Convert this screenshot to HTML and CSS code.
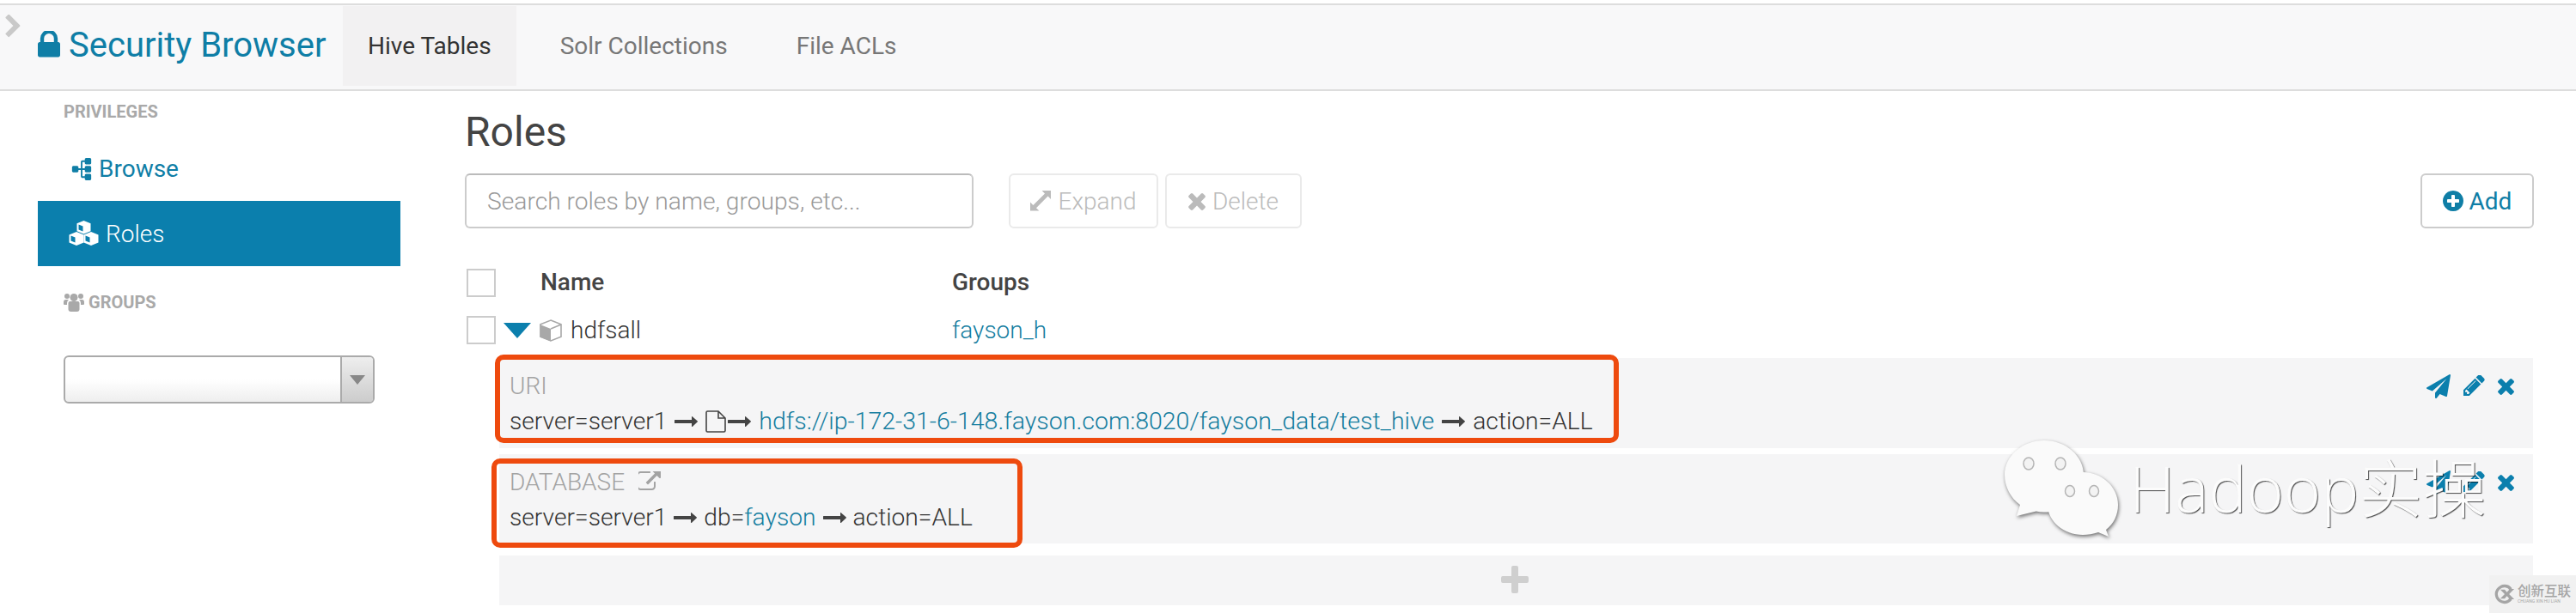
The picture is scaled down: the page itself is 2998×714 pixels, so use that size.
FILE: index.html
```html
<!DOCTYPE html>
<html lang="en">
<head>
<meta charset="utf-8">
<title>Security Browser</title>
<link rel="stylesheet" href="styles.css">
</head>
<body>
<svg class="sprite" width="0" height="0" aria-hidden="true">
  <symbol id="i-lock" viewBox="320 256 1152 1280"><path d="M640 768h512v-192q0-106-75-181t-181-75-181 75-75 181v192zm832 96v576q0 40-28 68t-68 28h-960q-40 0-68-28t-28-68v-576q0-40 28-68t68-28h32v-192q0-184 132-316t316-132 316 132 132 316v192h32q40 0 68 28t28 68z"/></symbol>
  <symbol id="i-chevron" viewBox="320 128 1100 1536"><path d="M1363 877l-742 742q-19 19-45 19t-45-19l-166-166q-19-19-19-45t19-45l531-531-531-531q-19-19-19-45t19-45l166-166q19-19 45-19t45 19l742 742q19 19 19 45t-19 45z"/></symbol>
  <symbol id="i-plus-circle" viewBox="128 128 1536 1536"><path d="M1344 960v-128q0-26-19-45t-45-19h-256v-256q0-26-19-45t-45-19h-128q-26 0-45 19t-19 45v256h-256q-26 0-45 19t-19 45v128q0 26 19 45t45 19h256v256q0 26 19 45t45 19h128q26 0 45-19t19-45v-256h256q26 0 45-19t19-45zm320-64q0 209-103 385.5t-279.5 279.5-385.5 103-385.5-103-279.5-279.5-103-385.5 103-385.5 279.5-279.5 385.5-103 385.5 103 279.5 279.5 103 385.5z"/></symbol>
  <symbol id="i-times" viewBox="300 240 1190 1320"><path d="M1490 1322q0 40-28 68l-136 136q-28 28-68 28t-68-28l-294-294-294 294q-28 28-68 28t-68-28l-136-136q-28-28-28-68t28-68l294-294-294-294q-28-28-28-68t28-68l136-136q28-28 68-28t68 28l294 294 294-294q28-28 68-28t68 28l136 136q28 28 28 68t-28 68l-294 294 294 294q28 28 28 68z"/></symbol>
  <symbol id="i-plane" viewBox="0 0 1792 1792"><path d="M1764 11q33 24 27 64l-256 1536q-5 29-32 45-14 8-31 8-11 0-24-5l-453-185-242 295q-18 23-49 23-13 0-22-4-19-7-30.5-23.5t-11.5-36.5v-349l864-1059-1069 925-395-162q-37-14-40-55-2-40 32-59l1664-960q15-9 32-9 20 0 36 11z"/></symbol>
  <symbol id="i-pencil" viewBox="128 192 1536 1536"><path d="M491 1536l91-91-235-235-91 91v107h128v128h107zm523-928q0-22-22-22-10 0-17 7l-542 542q-7 7-7 17 0 22 22 22 10 0 17-7l542-542q7-7 7-17zm-54-192l416 416-832 832h-416v-416zm683 96q0 53-37 90l-166 166-416-416 166-165q36-38 90-38 53 0 91 38l235 234q37 39 37 91z"/></symbol>
  <symbol id="i-arrow" viewBox="0 420 1728 950"><path d="M1728 893q0 14-10 24l-384 354q-16 14-35 6-19-9-19-29v-224h-1248q-14 0-23-9t-9-23v-192q0-14 9-23t23-9h1248v-224q0-21 19-29t35 5l384 350q10 10 10 23z"/></symbol>
  <symbol id="i-sitemap" viewBox="0 0 1792 1792"><path transform="rotate(-90 896 896)" d="M1792 1248v320q0 40-28 68t-68 28h-320q-40 0-68-28t-28-68v-320q0-40 28-68t68-28h96v-192h-512v192h96q40 0 68 28t28 68v320q0 40-28 68t-68 28h-320q-40 0-68-28t-28-68v-320q0-40 28-68t68-28h96v-192h-512v192h96q40 0 68 28t28 68v320q0 40-28 68t-68 28h-320q-40 0-68-28t-28-68v-320q0-40 28-68t68-28h96v-192q0-52 38-90t90-38h512v-192h-96q-40 0-68-28t-28-68v-320q0-40 28-68t68-28h320q40 0 68 28t28 68v320q0 40-28 68t-68 28h-96v192h512q52 0 90 38t38 90v192h96q40 0 68 28t28 68z"/></symbol>
  <symbol id="i-external" viewBox="128 128 1664 1536"><path d="M1408 928v320q0 119-84.5 203.5t-203.5 84.5h-832q-119 0-203.5-84.5t-84.5-203.5v-832q0-119 84.5-203.5t203.5-84.5h704q14 0 23 9t9 23v64q0 14-9 23t-23 9h-704q-66 0-113 47t-47 113v832q0 66 47 113t113 47h832q66 0 113-47t47-113v-320q0-14 9-23t23-9h64q14 0 23 9t9 23zm384-864v512q0 26-19 45t-45 19-45-19l-176-176-652 652q-10 10-23 10t-23-10l-114-114q-10-10-10-23t10-23l652-652-176-176q-19-19-19-45t19-45 45-19h512q26 0 45 19t19 45z"/></symbol>
  <symbol id="i-expand" viewBox="0 0 24 24"><path d="M24 0v10l-3.400-3.400L7 20.200l3.400 3.400H0v-10l3.400 3.400L17 3.400 13.600 0z"/></symbol>
  <symbol id="i-plus" viewBox="0 0 32 32"><path d="M12 2q0-2 2-2h4q2 0 2 2v10h10q2 0 2 2v4q0 2-2 2H20v10q0 2-2 2h-4q-2 0-2-2V20H2q-2 0-2-2v-4q0-2 2-2h10z"/></symbol>
  <symbol id="i-users" viewBox="0 0 24 22"><circle cx="12" cy="5.500" r="4.500"/><circle cx="4" cy="4" r="3"/><circle cx="20" cy="4" r="3"/><path d="M5.500 12q0-2 2-2h9q2 0 2 2v7q0 3-3 3h-7q-3 0-3-3z"/><path d="M0 11q0-3 2.500-3H6q-2 1.500-2 4v2H1q-1 0-1-1zM24 11q0-3-2.500-3H18q2 1.500 2 4v2h3q1 0 1-1z"/></symbol>
  <symbol id="i-cubes" viewBox="0 0 34 30"><path d="M17 0l8 3.200v9l-8 3.300-8-3.300v-9z"/><path d="M8.500 13L17 16.400v9L8.500 29 0 25.400v-9z"/><path d="M25.500 13L34 16.400v9L25.500 29 17 25.400v-9z"/><path class="cube-hole" d="M11 4.500l5 2v6l-5-2zM2 17.500l5 2v6l-5-2zM19 17.500l5 2v6l-5-2z"/></symbol>
  <symbol id="i-cube" viewBox="0 0 26 26"><path fill="#fff" stroke="#a8a8a8" stroke-width="1.600" d="M13 1l12 4.800v14.400L13 25 1 20.200V5.800z"/><path fill="#a8a8a8" d="M.5 6L13 11v14.500L.5 20.500z"/><path fill="none" stroke="#a8a8a8" stroke-width="1.600" d="M13 11l12-5"/></symbol>
</svg>

<header class="navbar">
  <svg class="nav-chevron"><use href="#i-chevron"/></svg>
  <a class="brand"><svg class="brand-lock"><use href="#i-lock"/></svg>Security Browser</a>
  <nav class="tabs">
    <a class="tab tab-active">Hive Tables</a>
    <a class="tab">Solr Collections</a>
    <a class="tab">File ACLs</a>
  </nav>
</header>

<div class="page">
  <aside class="sidebar">
    <div class="side-title side-title-first">PRIVILEGES</div>
    <a class="side-link"><svg class="ic-browse"><use href="#i-sitemap"/></svg>Browse</a>
    <a class="side-link side-link-active"><svg class="ic-cubes"><use href="#i-cubes"/></svg>Roles</a>
    <div class="side-title side-title-groups"><svg class="ic-users"><use href="#i-users"/></svg>GROUPS</div>
    <div class="select"><span class="select-arrow"></span></div>
  </aside>

  <main class="content">
    <h1 class="title">Roles</h1>
    <div class="toolbar">
      <div class="search">Search roles by name, groups, etc...</div>
      <a class="btn btn-off btn-expand"><svg class="ic-expand"><use href="#i-expand"/></svg>Expand</a>
      <a class="btn btn-off btn-delete"><svg class="ic-del"><use href="#i-times"/></svg>Delete</a>
      <a class="btn btn-add"><svg class="ic-add"><use href="#i-plus-circle"/></svg>Add</a>
    </div>

    <div class="thead">
      <span class="check"></span>
      <span class="th th-name">Name</span>
      <span class="th">Groups</span>
    </div>
    <div class="trow">
      <span class="check"></span>
      <span class="caret"></span>
      <svg class="ic-cube"><use href="#i-cube"/></svg>
      <span class="role-name">hdfsall</span>
      <a class="link">fayson_h</a>
    </div>

    <section class="perm">
      <div class="perm-text">
        <div class="perm-type">URI</div>
        <div class="perm-line">server=server1<svg class="arr"><use href="#i-arrow"/></svg><svg class="ic-file" viewBox="0 0 24 26"><path d="M1 2.500q0-1.500 1.500-1.500H15l8 8v14.500q0 1.500-1.500 1.500h-19Q1 25 1 23.500zM15 1v8h8"/></svg><svg class="arr arr-tight"><use href="#i-arrow"/></svg><a class="link link-long">hdfs://ip-172-31-6-148.fayson.com:8020/fayson_data/test_hive</a><svg class="arr"><use href="#i-arrow"/></svg>action=ALL</div>
      </div>
      <div class="perm-actions">
        <svg class="ic-plane"><use href="#i-plane"/></svg>
        <svg class="ic-pencil"><use href="#i-pencil"/></svg>
        <svg class="ic-x"><use href="#i-times"/></svg>
      </div>
      <div class="mark mark-uri"></div>
    </section>

    <section class="perm perm-db">
      <div class="perm-text">
        <div class="perm-type">DATABASE<svg class="ic-ext"><use href="#i-external"/></svg></div>
        <div class="perm-line">server=server1<svg class="arr arr-narrow"><use href="#i-arrow"/></svg>db=<a class="link">fayson</a><svg class="arr arr-narrow"><use href="#i-arrow"/></svg>action=ALL</div>
      </div>
      <div class="perm-actions">
        <svg class="ic-plane"><use href="#i-plane"/></svg>
        <svg class="ic-pencil"><use href="#i-pencil"/></svg>
        <svg class="ic-x"><use href="#i-times"/></svg>
      </div>
      <div class="mark mark-db"></div>
    </section>

    <div class="perm-add"><svg class="ic-plus"><use href="#i-plus"/></svg></div>
  </main>
</div>

<div class="watermark">
  <svg class="wm-bubbles" viewBox="0 0 132 112">
    <g class="wm-shape">
      <path d="M46 0c25 0 46 18 46 40 0 3-.5 6-1.300 9-20 0-36 15-38 34-2 .5-4 .5-7 .5-3 0-6-.3-9-1L14 88l4-13C7 67 0 54 0 40 0 18 21 0 46 0z"/>
      <path d="M91 37c22 0 41 17 41 38 0 12-5 22-14 29l3 8-12-5c-6 2-12 3-18 3-22 0-41-16-41-35 0-21 19-38 41-38z"/>
    </g>
    <g class="wm-eyes">
      <ellipse cx="28" cy="27" rx="6" ry="7"/><ellipse cx="65" cy="27" rx="6" ry="7"/>
      <ellipse cx="76" cy="59" rx="5.500" ry="6.500"/><ellipse cx="104" cy="59" rx="5.500" ry="6.500"/>
    </g>
  </svg>
  <span class="wm-text">Hadoop实操</span>
</div>

<div class="corner">
  <svg class="corner-logo" viewBox="0 0 28 28"><path d="M14 1a13 13 0 1 0 10 21l-3-3a9 9 0 1 1 0-10l3-3a13 13 0 0 0-10-5z"/><path d="M8 8h6l3 3.500L21 7h6l-7 7 7 7h-6l-4-4.500-3 3.500H8l6-6z"/></svg>
  <div class="corner-text"><span class="corner-cn">创新互联</span><span class="corner-en">CHUANG XIN HU LIAN</span></div>
</div>
</body>
</html>
```
FILE: styles.css
```css
* { box-sizing: border-box; }
html, body { margin: 0; padding: 0; }
body {
  position: relative;
  width: 2998px;
  height: 714px;
  overflow: hidden;
  background: #fff;
  color: #444;
  font-family: Roboto, "Noto Sans CJK SC", sans-serif;
  font-weight: 300;
  font-size: 28px;
}
svg { fill: currentColor; flex: none; }
a { color: inherit; text-decoration: none; }
.sprite { position: absolute; }

/* navbar */
.navbar {
  display: flex;
  align-items: stretch;
  height: 102px;
  margin-top: 4px;
  background: #f8f8f9;
  border-top: 2px solid #ddd;
  border-bottom: 2px solid #ddd;
}
.nav-chevron { width: 18px; height: 28px; margin: 11px 0 0 6px; color: #c9c9c9; }
.brand {
  display: flex;
  align-items: center;
  width: 355px;
  margin-left: 20px;
  padding-bottom: 6px;
  color: #0f7ea6;
  font-size: 40px;
  font-weight: 400;
}
.brand-lock { width: 26px; height: 32px; margin-right: 10px; }
.tabs { display: flex; }
.tab {
  display: flex;
  align-items: center;
  height: 93px;
  margin-top: 1px;
  padding: 0 29px;
  margin-right: 22px;
  color: #777;
  font-size: 28px;
  font-weight: 400;
}
.tab-active { background: #f2f1f2; color: #333; }

/* page */
.page { display: flex; }
.sidebar { width: 422px; margin-left: 44px; flex: none; }
.side-title { color: #a9a9a9; font-size: 20px; font-weight: 700; padding-left: 30px; }
.side-title-first { line-height: 48px; }
.side-title-groups { display: flex; align-items: center; height: 84px; }
.ic-users { width: 24px; height: 22px; margin-right: 5px; }
.side-link {
  display: flex;
  align-items: center;
  height: 80px;
  padding: 5px 0 0 38px;
  color: #0f7ea6;
  font-size: 28px;
  font-weight: 400;
}
.ic-browse { width: 26px; height: 26px; margin-right: 7px; }
.side-link-active { height: 76px; padding: 0 0 0 36px; background: #0b7fad; color: #fff; font-weight: 300; }
.ic-cubes { width: 35px; height: 30px; margin-right: 8px; }
.cube-hole { fill: #0b7fad; }
.select {
  position: relative;
  width: 362px;
  height: 56px;
  margin: 20px 0 0 30px;
  border: 2px solid #aaa;
  border-radius: 6px;
  background: linear-gradient(#fff 50%, #eee);
}
.select-arrow {
  position: absolute;
  top: 0; right: 0; bottom: 0;
  width: 38px;
  border-left: 2px solid #aaa;
  border-radius: 0 4px 4px 0;
  background: linear-gradient(#eee, #ccc);
}
.select-arrow::after {
  content: "";
  position: absolute;
  left: 9px;
  top: 21px;
  border-style: solid;
  border-width: 11px 9px 0;
  border-color: #888 transparent transparent;
}

/* content */
.content { flex: none; width: 2408px; margin-left: 75px; }
.title { margin: 0; height: 96px; color: #444; font-size: 48px; font-weight: 400; line-height: 95px; }
.toolbar { display: flex; align-items: stretch; height: 64px; }
.search {
  display: flex;
  align-items: center;
  width: 592px;
  margin-right: 41px;
  padding-left: 24px;
  border: 2px solid #ccc;
  border-top-color: #bbb;
  border-radius: 6px;
  color: #999;
  font-size: 28.200px;
}
.btn {
  display: flex;
  align-items: center;
  justify-content: center;
  border: 2px solid #ccc;
  border-radius: 6px;
  color: #0f7ea6;
  font-size: 28px;
}
.btn-off { border-color: #eaeaea; color: #bbb; }
.btn-expand { width: 174px; margin-right: 8px; }
.btn-delete { width: 159px; }
.btn-add { width: 132px; margin-left: auto; font-weight: 400; }
.ic-expand { width: 24px; height: 24px; margin-right: 8px; }
.ic-del { width: 20px; height: 22px; margin-right: 8px; }
.ic-add { width: 24px; height: 24px; margin-right: 7px; }

.thead, .trow { display: flex; align-items: center; }
.thead { height: 33px; margin-top: 47px; }
.trow { height: 33px; margin-top: 22px; }
.check { width: 34px; height: 33px; margin-left: 2px; border: 2px solid #ccc; background: #fff; }
.th { padding-bottom: 3px; font-weight: 500; font-size: 28px; color: #444; }
.th-name { width: 479px; margin-left: 52px; }
.caret {
  width: 0; height: 0;
  margin-left: 9px;
  border-style: solid;
  border-width: 18px 16px 0;
  border-color: #0b7fad transparent transparent;
}
.ic-cube { width: 26px; height: 26px; margin-left: 10px; }
.role-name { width: 444px; margin-left: 10px; font-size: 28px; font-weight: 300; color: #333; }
.link { color: #147d9f; font-weight: 300; }
.link-long { font-size: 28.500px; }

.perm {
  position: relative;
  display: flex;
  justify-content: space-between;
  width: 2367px;
  height: 105px;
  margin: 16px 0 0 40px;
  padding: 12px 0 0 12px;
  background: #f5f5f6;
}
.perm-db { height: 104px; margin-top: 7px; }
.perm-type { display: flex; align-items: center; height: 41px; color: #a3a3a3; }
.perm-line { display: flex; align-items: center; height: 41px; color: #333; font-size: 28.200px; font-weight: 300; }
.arr { width: 27px; height: 16px; margin: 0 9px; color: #444; }
.arr-tight { margin-left: 2px; }
.arr-narrow { margin: 0 8px; }
.ic-file { width: 24px; height: 26px; fill: none; stroke: #444; stroke-width: 1.600; }
.ic-ext { width: 26px; height: 24px; margin: -2px 0 0 16px; color: #a3a3a3; }
.perm-actions { display: flex; align-items: center; height: 27px; margin: 7px 22px 0 0; color: #0b7fad; }
.ic-plane { width: 28px; height: 28px; margin-right: 15px; }
.ic-pencil { width: 25px; height: 25px; margin-right: 15px; }
.ic-x { width: 19px; height: 21px; }
.mark { position: absolute; border: 6px solid #ee4a0e; border-radius: 10px; }
.mark-uri { left: -5px; top: -4px; width: 1308px; height: 103px; }
.mark-db { left: -9px; top: 5px; width: 618px; height: 104px; }
.perm-add {
  display: flex;
  align-items: center;
  justify-content: center;
  width: 2367px;
  height: 58px;
  margin: 14px 0 0 40px;
  padding: 0 4px 2px 0;
  background: #f5f5f6;
}
.ic-plus { width: 32px; height: 32px; color: #cfcfcf; }

/* overlays */
.watermark {
  position: absolute;
  left: 2333px;
  top: 513px;
  display: flex;
  align-items: flex-start;
}
.wm-bubbles { width: 132px; height: 112px; overflow: visible; }
.wm-shape { fill: #fafafa; filter: drop-shadow(1px 2px 2px rgba(0, 0, 0, .55)); }
.wm-eyes { fill: #f3f3f3; stroke: #b5b5b5; stroke-width: 1.500; }
.wm-text {
  margin: 8px 0 0 13px;
  color: #fcfcfc;
  font-family: "Open Sans", "Noto Sans CJK SC", sans-serif;
  font-size: 74px;
  font-weight: 300;
  line-height: 96px;
  white-space: nowrap;
  text-shadow: 1px 1px 1px rgba(0, 0, 0, .7);
}
.corner {
  position: absolute;
  right: 0;
  bottom: 0;
  display: flex;
  align-items: center;
  width: 101px;
  height: 44px;
  padding-left: 6px;
  background: #f1f1f1;
  color: #a5a5a5;
}
.corner-logo { width: 24px; height: 24px; margin-right: 3px; }
.corner-text { display: flex; flex-direction: column; }
.corner-cn { font-size: 15.500px; font-weight: 500; line-height: 16px; white-space: nowrap; }
.corner-en { font-size: 5px; line-height: 6px; font-weight: 400; white-space: nowrap; }
```
